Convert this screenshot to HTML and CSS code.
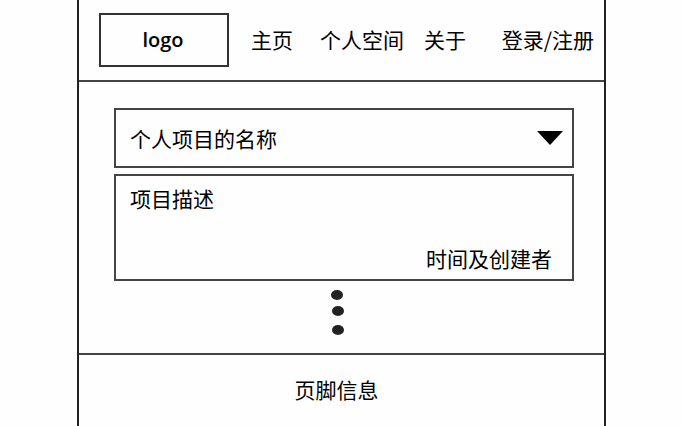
FILE: index.html
```html
<!DOCTYPE html>
<html lang="zh-CN">
<head>
<meta charset="utf-8">
<meta name="viewport" content="width=device-width, initial-scale=1">
<title>个人空间</title>
<link rel="stylesheet" href="styles.css">
</head>
<body>
<div class="page">
  <header class="header">
    <a class="logo" href="#">logo</a>
    <nav class="nav">
      <a class="home" href="#">主页</a>
      <a href="#">个人空间</a>
      <a href="#">关于</a>
    </nav>
    <a class="account" href="#">登录/注册</a>
  </header>
  <main class="main">
    <button class="project" type="button" aria-expanded="true" aria-controls="details">
      <span>个人项目的名称</span>
      <svg class="arrow" viewBox="0 0 26 14" aria-hidden="true"><path d="M0 0H26L13 14Z"/></svg>
    </button>
    <section class="details" id="details">
      <p class="description">项目描述</p>
      <p class="meta">时间及创建者</p>
    </section>
    <svg class="more" viewBox="0 0 16 48" aria-hidden="true">
      <ellipse cx="7" cy="6" rx="6" ry="5"/>
      <ellipse cx="8" cy="22" rx="6" ry="5"/>
      <ellipse cx="8" cy="41" rx="6" ry="5"/>
    </svg>
  </main>
  <footer class="footer">页脚信息</footer>
</div>
</body>
</html>
```
FILE: styles.css
```css
* {
  box-sizing: border-box;
}

body {
  margin: 0;
  padding: 0 76px 0 77px;
  background: #fefefe;
  color: #000;
  font: 21px/24px "Noto Sans CJK SC", sans-serif;
}

a {
  color: inherit;
  text-decoration: none;
  white-space: nowrap;
}

p {
  margin: 0;
}

.page {
  display: flex;
  flex-direction: column;
  min-height: 100vh;
  border: solid #222;
  border-width: 0 2px;
}

.header {
  display: flex;
  align-items: center;
  padding: 13px 10px 13px 20px;
  border-bottom: 2px solid #444;
}

.logo {
  flex: 0 1 130px;
  padding: 13px 2px 13px 0;
  border: 2px solid #333;
  font: 600 20px/24px "Open Sans", sans-serif;
  text-align: center;
}

.nav {
  display: flex;
  gap: 20px;
  margin-left: 22px;
  padding-bottom: 2px;
}

.home {
  margin-right: 7px;
}

.account {
  margin-left: auto;
  padding-bottom: 2px;
}

.main {
  display: flex;
  flex: 1;
  flex-direction: column;
  padding: 26px 30px 16px 35px;
}

.project {
  display: flex;
  align-items: center;
  justify-content: space-between;
  padding: 16px 9px 16px 14px;
  border: 2px solid #444;
  background: none;
  color: inherit;
  font: inherit;
}

.arrow {
  width: 26px;
  height: 14px;
}

.details {
  display: flex;
  flex-direction: column;
  justify-content: space-between;
  gap: 36px;
  margin-top: 6px;
  padding: 10px 20px 9px 14px;
  border: 2px solid #444;
}

.meta {
  align-self: flex-end;
}

.more {
  align-self: center;
  width: 16px;
  height: 48px;
  margin: 8px 12px 0 0;
  fill: #222;
}

.footer {
  padding: 22px 34px 25px 24px;
  border-top: 2px solid #444;
  text-align: center;
}
```
